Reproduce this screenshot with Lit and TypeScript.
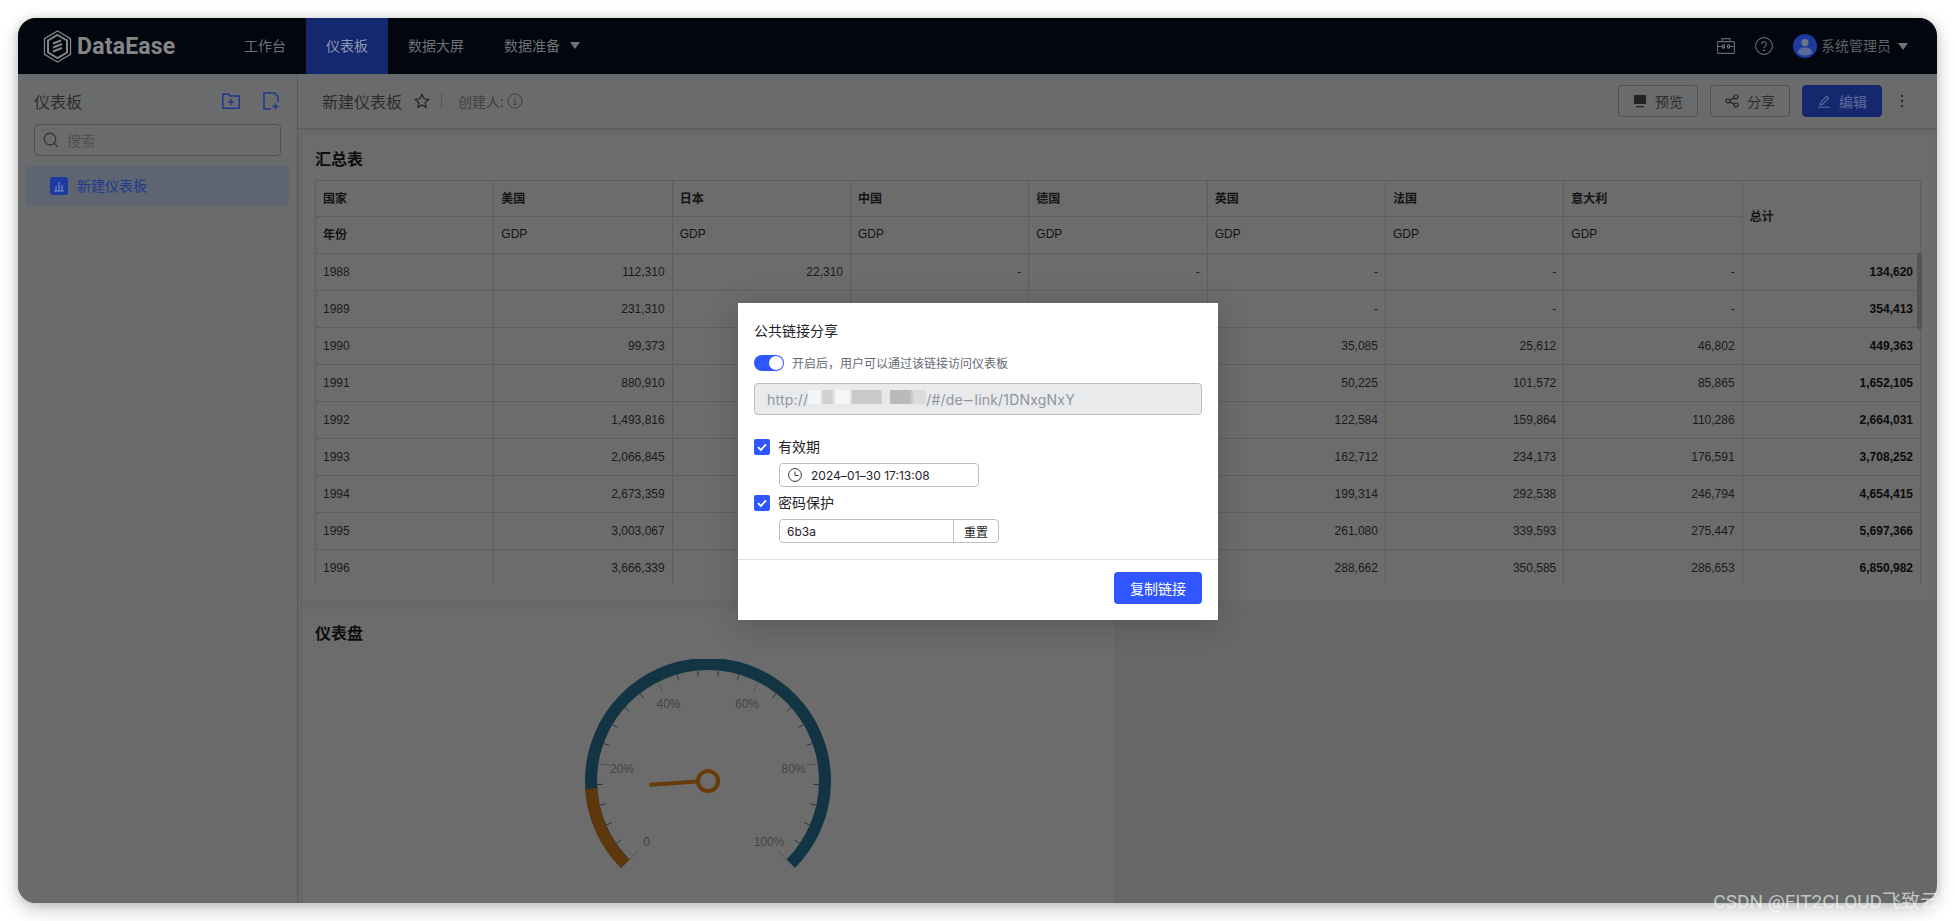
import { LitElement, html, css, svg } from "lit";
import { customElement } from "lit/decorators.js";

const CX = 149, CY = 122;
const polar = (r: number, deg: number) => {
  const a = (deg * Math.PI) / 180;
  return [CX + r * Math.cos(a), CY - r * Math.sin(a)];
};
const arc = (r: number, from: number, to: number) => {
  const [x1, y1] = polar(r, from);
  const [x2, y2] = polar(r, to);
  const large = Math.abs(from - to) > 180 ? 1 : 0;
  return `M${x1} ${y1}A${r} ${r} 0 ${large} 1 ${x2} ${y2}`;
};
const angleOf = (p: number) => 225 - (p / 100) * 270;

const rows: string[][] = [
  ["1988", "112,310", "22,310", "-", "-", "-", "-", "-", "134,620"],
  ["1989", "231,310", "", "", "", "-", "-", "-", "354,413"],
  ["1990", "99,373", "", "", "", "35,085", "25,612", "46,802", "449,363"],
  ["1991", "880,910", "", "", "", "50,225", "101,572", "85,865", "1,652,105"],
  ["1992", "1,493,816", "", "", "", "122,584", "159,864", "110,286", "2,664,031"],
  ["1993", "2,066,845", "", "", "", "162,712", "234,173", "176,591", "3,708,252"],
  ["1994", "2,673,359", "", "", "", "199,314", "292,538", "246,794", "4,654,415"],
  ["1995", "3,003,067", "", "", "", "261,080", "339,593", "275,447", "5,697,366"],
  ["1996", "3,666,339", "", "", "", "288,662", "350,585", "286,653", "6,850,982"],
];
const countries = ["美国", "日本", "中国", "德国", "英国", "法国", "意大利"];

const check = html`<svg class="chk" viewBox="0 0 16 16"><path d="M4 8.2l2.8 2.8L12 5.4" fill="none" stroke="#fff" stroke-width="1.8"/></svg>`;
const dash = html`<span class="dash">-</span>`;

@customElement("app-root")
export class AppRoot extends LitElement {
  static styles = css`
    :host { display: block; width: 1955px; height: 921px; padding: 18px; box-sizing: border-box; background: #fff;
      font-family: "Noto Sans CJK SC", "Noto Sans", sans-serif; position: relative; overflow: hidden; }
    .win { width: 1919px; height: 885px; border-radius: 18px; overflow: hidden; position: relative; display: flex; flex-direction: column;
      background: #666967; box-shadow: 0 6px 18px rgba(0,0,0,.22), 0 0 8px rgba(0,0,0,.12); }
    .top { height: 56px; flex: none; background: #02070f; display: flex; align-items: center; color: #6d7075; font-size: 14px; }
    .logo { display: flex; align-items: center; width: 206px; padding-left: 25px; box-sizing: border-box; gap: 5px; height: 100%; }
    .logo span { font: 700 23px/1 "Roboto", "Liberation Sans", sans-serif; color: #858687; letter-spacing: .2px; }
    .nav { display: flex; height: 100%; }
    .nav div { padding: 0 20px 2px; display: flex; align-items: center; gap: 10px; }
    .nav .on { background: #13286f; color: #8f97ae; }
    .tri { width: 0; height: 0; border-left: 5px solid transparent; border-right: 5px solid transparent; border-top: 7px solid #717478; display: block; }
    .top-right { margin-left: auto; display: flex; align-items: center; padding-right: 29px; }
    .top-right .hi { margin-right: 20px; display: block; }
    .avatar { width: 24px; height: 24px; margin-right: 4px; display: block; }
    .user { margin: 0 7px 2px 0; color: #5f6266; }
    .body { flex: 1; display: flex; min-height: 0; }
    .side { width: 280px; flex: none; box-sizing: border-box; background: #6a6b6c; border-right: 1px solid #575859; padding: 16px 8px 0; }
    .side-h { display: flex; align-items: center; height: 24px; box-sizing: border-box; padding: 0 10px 2px 8px; color: #2a2b2c; font-size: 16px; margin-bottom: 10px; }
    .side-h svg { display: block; }
    .side-h .a { margin-left: auto; margin-right: 23px; }
    .search { height: 32px; margin: 0 8px; box-sizing: border-box; border: 1px solid #505152; border-radius: 4px; display: flex; align-items: center; padding-left: 8px; gap: 8px; color: #505152; font-size: 14px; }
    .tree { margin-top: 10px; height: 40px; border-radius: 4px; background: #5e6470; display: flex; align-items: center; padding-left: 24px; gap: 9px; color: #1f3a93; font-size: 14px; }
    .tree svg { display: block; }
    .tree span { margin-bottom: 2px; }
    .main { flex: 1; display: flex; flex-direction: column; min-width: 0; }
    .bar { height: 55px; flex: none; box-sizing: border-box; background: #6a6b6c; border-bottom: 1px solid #595b5a; display: flex; align-items: center; padding-left: 24px; padding-right: 33px; color: #2b2c2d; font-size: 16px; }
    .bar .star { margin-left: 12px; display: block; }
    .bar .sep { width: 1px; height: 16px; background: #565758; margin: 0 16px 0 11px; }
    .bar .by { font-size: 14px; color: #3f4142; margin-right: 3px; }
    .bar .actions { margin-left: auto; display: flex; align-items: center; gap: 12px; }
    .btn { width: 80px; height: 32px; box-sizing: border-box; border: 1px solid #505152; border-radius: 4px; display: flex; align-items: center; justify-content: center; gap: 8px; color: #2c2d2e; font-size: 14px; }
    .btn svg { display: block; }
    .btn.pri { background: #15286e; border-color: #15286e; color: #5e6c9c; }
    .kebab { margin-left: 6px; display: block; }
    .content { flex: 1; min-height: 0; padding: 6px 2px 0 5px; display: flex; flex-direction: column; gap: 8px; overflow: hidden; }
    .card { background: #6c6c6c; padding: 10px 12px 0; box-sizing: border-box; }
    .card h3 { margin: 0; font-size: 16px; font-weight: 700; color: #0c0c0c; line-height: 26px; }
    .c1 { height: 466px; position: relative; }
    .c2 { width: 811px; flex: 1; min-height: 0; }
    .tw { margin-top: 9px; height: 404px; overflow: hidden; position: relative; }
    table { border-collapse: collapse; table-layout: fixed; width: 1606px; font: 12px "Liberation Sans", "Noto Sans CJK SC", sans-serif; color: #141414; }
    th, td { height: 37px; padding: 0 7px; box-sizing: border-box; border: 1px solid #5d5e5e; text-align: left; font-weight: 400; overflow: hidden; white-space: nowrap; }
    th { padding-bottom: 3px; }
    tr.r1 th { height: 36px; }
    th.b { font-weight: 700; }
    td { text-align: right; color: #1a1a1a; }
    td.y { text-align: left; }
    td.t { font-weight: 700; color: #0b0b0b; }
    .sb { position: absolute; right: 1px; top: 73px; width: 5px; height: 77px; border-radius: 3px; background: #555; }
    .gauge { display: block; margin: 14px auto 0; }
    .gauge text { font: 12px "Liberation Sans", sans-serif; fill: #444; text-anchor: middle; dominant-baseline: central; }

    .mask { position: absolute; inset: 0; display: flex; justify-content: center; align-items: flex-start; padding-top: 285px; box-sizing: border-box; pointer-events: none; }
    .dlg { width: 480px; height: 317px; box-sizing: border-box; background: #fff; box-shadow: 0 6px 30px rgba(0,0,0,.18); color: #1f2329; font: 14px "Inter", "Noto Sans CJK SC", sans-serif; margin-left: 1px; }
    .dlg .in { padding: 17px 16px 16px; border-bottom: 1px solid #dee0e3; height: 257px; box-sizing: border-box; }
    .ttl { line-height: 22px; }
    .sw { display: flex; align-items: center; gap: 8px; margin-top: 13px; height: 16px; font-size: 12px; color: #646a73; }
    .up { margin-bottom: 2px; }
    .track { width: 30px; height: 16px; border-radius: 8px; background: #2f56ff; position: relative; flex: none; }
    .track i { position: absolute; right: 1px; top: 1px; width: 14px; height: 14px; background: #fff; border-radius: 50%; }
    .url { margin-top: 12px; height: 32px; box-sizing: border-box; border: 1px solid #bbbfc4; border-radius: 4px; background: #e9eaec; color: #8f959e; display: flex; align-items: center; padding-left: 12px; white-space: nowrap; letter-spacing: .2px; }
    .red { display: inline-block; width: 118px; height: 14px; margin-bottom: 5px; flex: none;
      background: linear-gradient(90deg, #f4f5f6 0 10%, #cfd0d2 13% 20%, #f7f7f8 24% 35%, #c8c9cb 38% 62%, #e8e8e9 63% 69%, #b9babc 70% 86%, #dcdcdd 90% 100%); }
    .dash { display: inline-block; transform: scaleX(1.9); margin: 0 2.5px; }
    .date .dash { transform: scaleX(1.6); margin: 0 .4px; }
    .cbrow { display: flex; align-items: center; gap: 8px; height: 16px; margin-top: 8px; }
    .cbrow.first { margin-top: 24px; }
    .box { width: 16px; height: 16px; background: #2f56ff; border-radius: 2px; flex: none; }
    .chk { display: block; width: 16px; height: 16px; }
    .field { margin: 8px 0 0 25px; height: 24px; box-sizing: border-box; border: 1px solid #bbbfc4; border-radius: 4px; display: flex; align-items: center; font-size: 12px; }
    .date { width: 200px; padding-left: 8px; gap: 9px; }
    .date svg { display: block; }
    .pw { width: 220px; }
    .pw span { flex: 1; padding-left: 7px; }
    .pw b { width: 45px; flex: none; box-sizing: border-box; height: 100%; border-left: 1px solid #bbbfc4; font-weight: 400; display: flex; align-items: center; justify-content: center; }
    .foot { display: flex; justify-content: flex-end; padding: 12px 16px; }
    .go { width: 88px; height: 32px; background: #2f56ff; border-radius: 4px; color: #fff; display: flex; align-items: center; justify-content: center; }
    .mark { position: absolute; right: 16px; bottom: 7px; font: 19px/24px "Roboto", "Noto Sans CJK SC", sans-serif; color: rgba(255,255,255,.62); white-space: nowrap; }
  `;

  private gauge() {
    const ticks = [];
    for (let p = 0; p <= 100; p += 4) {
      const a = angleOf(p);
      const major = p % 20 === 0;
      const [x1, y1] = polar(111, a);
      const [x2, y2] = polar(major ? 99 : 105, a);
      ticks.push(svg`<line x1=${x1} y1=${y1} x2=${x2} y2=${y2} stroke=${major ? "#555" : "#2b3340"} stroke-width="1"/>`);
    }
    const val = 15.3;
    const va = angleOf(val);
    const [nx, ny] = polar(57, va);
    const labels: [string, number, number][] = [
      ["0", 87.5, 183], ["20%", 63, 110], ["40%", 109.5, 45], ["60%", 188, 45], ["80%", 234.5, 110], ["100%", 210, 183],
    ];
    return html`<svg class="gauge" width="300" height="240" viewBox="0 0 300 240">
      <path d=${arc(117, 225, -45)} fill="none" stroke="#133442" stroke-width="12"/>
      <path d=${arc(117, 225, va)} fill="none" stroke="#5f370d" stroke-width="12"/>
      ${ticks}
      ${labels.map(([t, x, y]) => svg`<text x=${x} y=${y}>${t}</text>`)}
      <line x1=${CX - 11} y1=${CY + 0.6} x2=${nx} y2=${ny} stroke="#683b0b" stroke-width="4" stroke-linecap="round"/>
      <circle cx=${CX} cy=${CY} r="10" fill="none" stroke="#683b0b" stroke-width="4"/>
    </svg>`;
  }

  render() {
    return html`
      <div class="win">
        <div class="top">
          <div class="logo">
            <svg width="29" height="33" viewBox="0 0 29 33" fill="none" stroke="#858687">
              <path d="M14.5 1L27.5 8.7V24.3L14.5 32L1.5 24.3V8.7Z" stroke-width="1.3"/>
              <path d="M14.5 5L24 10.5V22.500L14.5 28L5 22.500V10.500Z" stroke-width="2"/>
              <path d="M10 13.5L18 10.5M10 17.5L19 14M10 21.5L19 18" stroke-width="2"/>
            </svg>
            <span>DataEase</span>
          </div>
          <div class="nav">
            <div>工作台</div><div class="on">仪表板</div><div>数据大屏</div>
            <div>数据准备<i class="tri"></i></div>
          </div>
          <div class="top-right">
            <svg class="hi" width="18" height="18" viewBox="0 0 18 18" fill="none" stroke="#65686c" stroke-width="1.1"><rect x=".6" y="4.6" width="16.8" height="11.8" rx="1"/><path d="M5 4.5V1.6h8v2.9M.6 9.5h5M12.4 9.5h5"/><rect x="5.5" y="8" width="2" height="3"/><rect x="10.5" y="8" width="2" height="3"/></svg>
            <svg class="hi" width="18" height="18" viewBox="0 0 18 18" fill="none" stroke="#65686c" stroke-width="1.1"><circle cx="9" cy="9" r="8.4"/><path d="M6.6 7a2.4 2.4 0 1 1 3.6 2.1c-.8.5-1.2 1-1.2 2"/><circle cx="9" cy="13.2" r=".5" fill="#65686c"/></svg>
            <svg class="avatar" viewBox="0 0 24 24"><circle cx="12" cy="12" r="12" fill="#1e3a9e"/><circle cx="12" cy="8.6" r="3.6" fill="#6d7686"/><path d="M4.5 19c.6-4 3.6-5.6 7.5-5.6S18.900 15 19.500 19a12 12 0 0 1-15 0Z" fill="#5a6a9c"/></svg>
            <span class="user">系统管理员</span><i class="tri"></i>
          </div>
        </div>
        <div class="body">
          <div class="side">
            <div class="side-h">仪表板
              <svg class="a" width="18" height="16" viewBox="0 0 18 16" fill="none" stroke="#1d3a8f" stroke-width="1.5"><path d="M.8 1h5.700l1.600 2h9.100v12.200H.8Z"/><path d="M6 9h6M9 6v6"/></svg>
              <svg width="16" height="18" viewBox="0 0 16 18" fill="none" stroke="#1d3a8f" stroke-width="1.5"><path d="M8 17H1V1h10.500L15 4.500V10"/><path d="M9.500 14.500h6M12.500 11.500v6"/></svg>
            </div>
            <div class="search">
              <svg width="16" height="16" viewBox="0 0 16 16" fill="none" stroke="#333" stroke-width="1.2"><circle cx="7" cy="7" r="5.800"/><path d="M11.200 11.200l3.500 3.500"/></svg>
              搜索
            </div>
            <div class="tree">
              <svg width="18" height="18" viewBox="0 0 18 18"><rect width="18" height="18" rx="3" fill="#1c3a9f"/><path d="M4 14h10M6 14V9M9 14V5M12 14V8" stroke="#7f8fc4" stroke-width="1.100" fill="none"/></svg>
              <span>新建仪表板</span>
            </div>
          </div>
          <div class="main">
            <div class="bar">
              新建仪表板
              <svg class="star" width="16" height="16" viewBox="0 0 16 16" fill="none" stroke="#222" stroke-width="1.200"><path d="M8 1.500l2 4.300 4.700.6-3.500 3.200.9 4.700L8 12l-4.100 2.300.9-4.700L1.300 6.400 6 5.800Z"/></svg>
              <i class="sep"></i>
              <span class="by">创建人:</span>
              <svg width="16" height="16" viewBox="0 0 16 16" fill="none" stroke="#3f4142" stroke-width="1"><circle cx="8" cy="8" r="7"/><path d="M6.500 7h1.500v4.500M6.500 11.500h3M8 4.500v1"/></svg>
              <div class="actions">
                <div class="btn"><svg width="14" height="14" viewBox="0 0 14 14"><path d="M1 1h12v9H1Z" fill="#222" /><path d="M3 12.700h8" stroke="#222" stroke-width="1.200"/></svg>预览</div>
                <div class="btn"><svg width="14" height="14" viewBox="0 0 14 14" fill="none" stroke="#222" stroke-width="1.200"><circle cx="3" cy="7" r="2"/><circle cx="11" cy="3" r="2"/><circle cx="11" cy="11" r="2"/><path d="M4.800 6.100l4.400-2.200M4.800 7.900l4.400 2.200"/></svg>分享</div>
                <div class="btn pri"><svg width="14" height="14" viewBox="0 0 14 14" fill="none" stroke="#5e6c9c" stroke-width="1.100"><path d="M3 9.500L9.500 2l2.200 2L5 11H3Z"/><path d="M1 13.300h12"/></svg>编辑</div>
                <svg class="kebab" width="4" height="14" viewBox="0 0 4 14" fill="#2c2d2e"><circle cx="2" cy="2" r="1.200"/><circle cx="2" cy="7" r="1.200"/><circle cx="2" cy="12" r="1.200"/></svg>
              </div>
            </div>
            <div class="content">
              <div class="card c1">
                <h3>汇总表</h3>
                <div class="tw">
                  <table>
                    <thead>
                      <tr class="r1"><th class="b">国家</th>${countries.map((c) => html`<th class="b">${c}</th>`)}<th class="b" rowspan="2">总计</th></tr>
                      <tr><th class="b">年份</th>${countries.map(() => html`<th>GDP</th>`)}</tr>
                    </thead>
                    <tbody>
                      ${rows.map((r) => html`<tr>${r.map((v, i) => html`<td class=${i === 0 ? "y" : i === 8 ? "t" : ""}>${v}</td>`)}</tr>`)}
                    </tbody>
                  </table>
                  <div class="sb"></div>
                </div>
              </div>
              <div class="card c2">
                <h3>仪表盘</h3>
                ${this.gauge()}
              </div>
            </div>
          </div>
        </div>
        <div class="mask">
          <div class="dlg">
            <div class="in">
              <div class="ttl">公共链接分享</div>
              <div class="sw"><span class="track"><i></i></span><span class="up">开启后，用户可以通过该链接访问仪表板</span></div>
              <div class="url">http://<span class="red"></span>/#/de${dash}link/1DNxgNxY</div>
              <div class="cbrow first"><span class="box">${check}</span><span class="up">有效期</span></div>
              <div class="field date">
                <svg width="14" height="14" viewBox="0 0 14 14" fill="none" stroke="#333" stroke-width="1"><circle cx="7" cy="7" r="6.400"/><path d="M7 3.500V7.500H10.500"/></svg>
                <span>2024${dash}01${dash}30 17:13:08</span>
              </div>
              <div class="cbrow"><span class="box">${check}</span><span class="up">密码保护</span></div>
              <div class="field pw"><span>6b3a</span><b>重置</b></div>
            </div>
            <div class="foot"><div class="go">复制链接</div></div>
          </div>
        </div>
      </div>
      <div class="mark">CSDN @FIT2CLOUD飞致云</div>
    `;
  }
}
